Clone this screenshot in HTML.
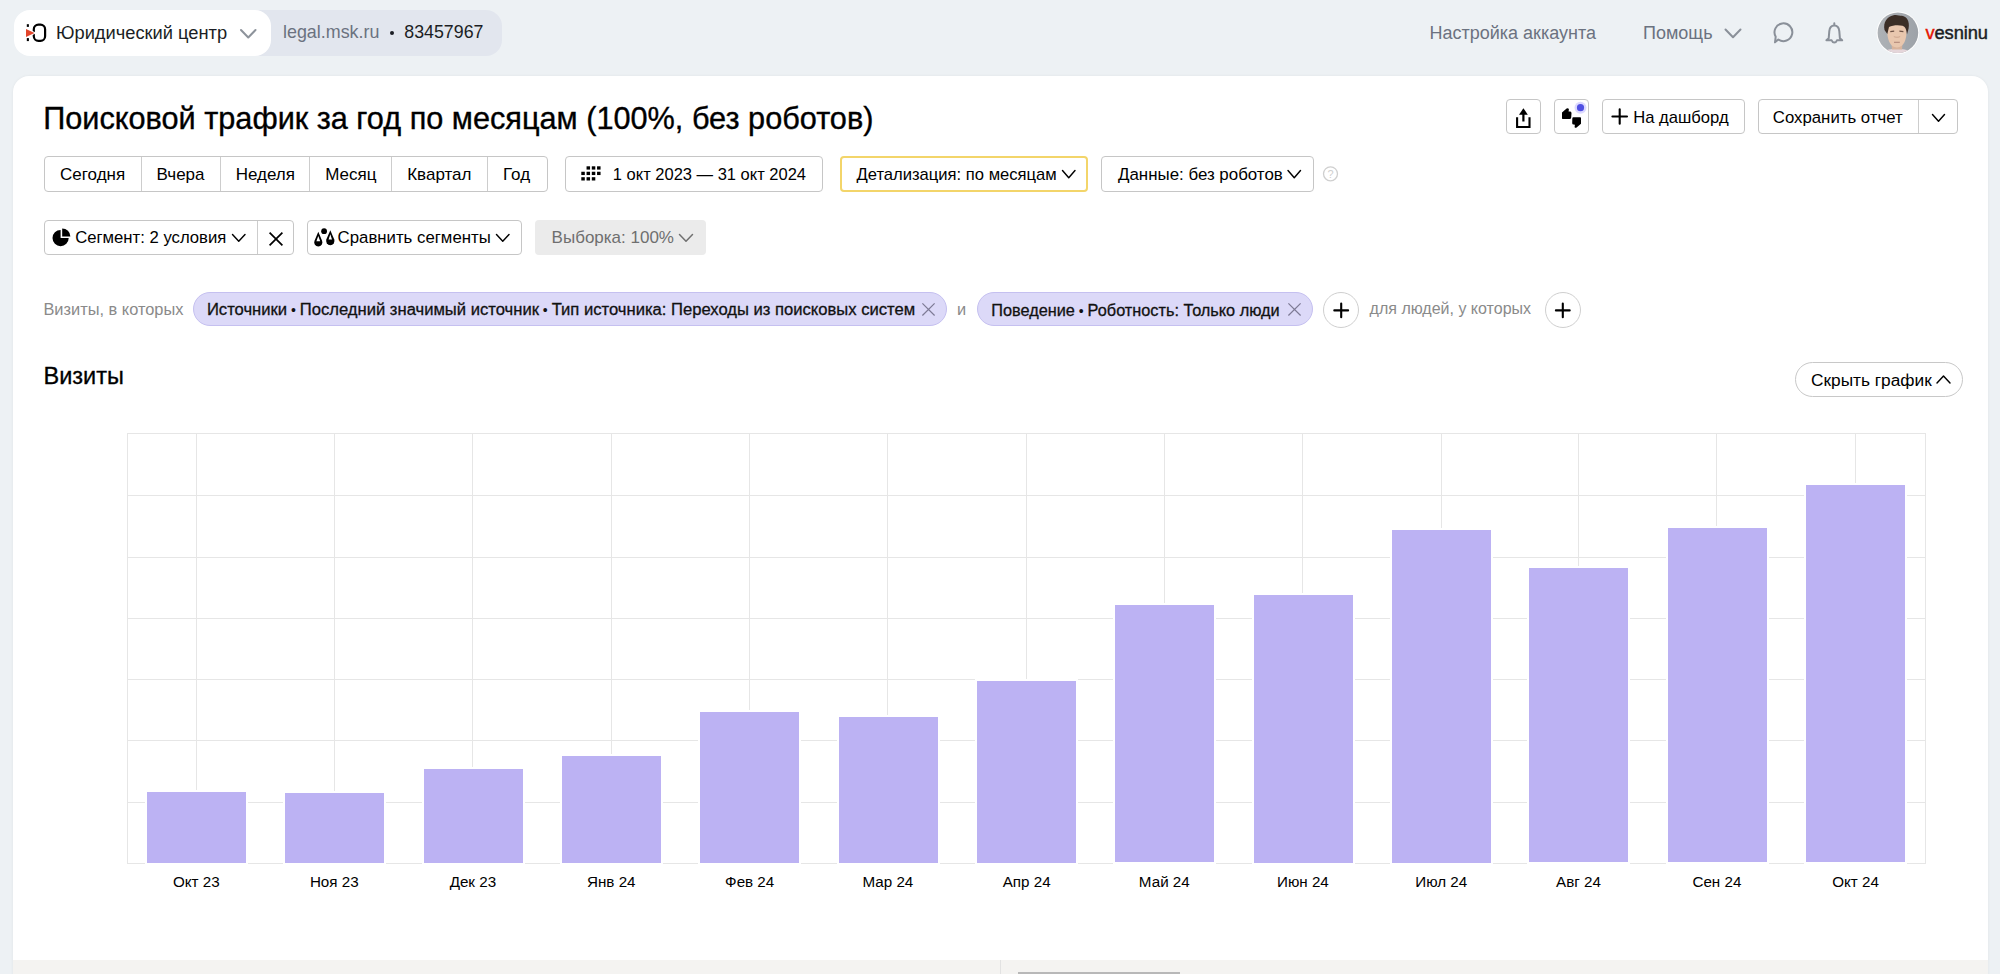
<!DOCTYPE html>
<html><head><meta charset="utf-8">
<style>
*{box-sizing:border-box;margin:0;padding:0}
html,body{width:2000px;height:974px;overflow:hidden;background:#edf1f4;font-family:"Liberation Sans",sans-serif;color:#000}
.a{position:absolute}
.t{position:absolute;white-space:nowrap;line-height:1}
.btn{position:absolute;border:1px solid #c6c6c6;border-radius:4px;background:#fff}
.vl{position:absolute;width:1px;background:#cdcdcd}
svg{position:absolute;overflow:visible}
.card{position:absolute;left:13px;top:76px;width:1975px;height:920px;background:#fff;border-radius:16px;box-shadow:0 0 3px rgba(0,0,0,0.06)}
.gh{position:absolute;left:127px;width:1799px;height:1px;background:#e6e6e6}
.gv{position:absolute;top:433px;height:430px;width:1px;background:#e6e6e6}
.bar{position:absolute;width:99px;background:#bcb2f3;box-shadow:0 0 0 2px #fff}
.ml{position:absolute;top:873.7px;width:120px;text-align:center;font-size:15.2px;line-height:1}
</style></head>
<body>
<!-- header -->
<div class="a" style="left:250px;top:10px;width:252px;height:46px;background:#e2e6ee;border-radius:0 16px 16px 0"></div>
<div class="a" style="left:14px;top:10px;width:257px;height:46px;background:#fff;border-radius:16px"></div>

<div class="t" style="left:56px;top:23.7px;font-size:18.3px;color:#1b1e24">Юридический центр</div>
<div class="t" style="left:283px;top:24.3px;font-size:17.9px;color:#6b7280">legal.msk.ru</div>
<div class="a" style="left:390px;top:30.5px;width:4px;height:4px;border-radius:50%;background:#1b1e24"></div>
<div class="t" style="left:404.3px;top:24.3px;font-size:17.8px;color:#1b1e24">83457967</div>

<div class="t" style="left:1429.5px;top:24.3px;font-size:18px;color:#6b7280">Настройка аккаунта</div>
<div class="t" style="left:1643px;top:24.1px;font-size:18px;color:#6b7280">Помощь</div>

<div class="t" style="left:1925.5px;top:23.7px;font-size:18.3px;color:#1b1e24;-webkit-text-stroke:0.45px #1b1e24;letter-spacing:-0.1px"><span style="color:#e61400;-webkit-text-stroke-color:#e61400">v</span>esninu</div>

<!-- card -->
<div class="card"></div>
<div class="t" style="left:43.2px;top:104px;font-size:30.68px;-webkit-text-stroke:0.35px #000">Поисковой трафик за год по месяцам (100%, без роботов)</div>

<!-- row1 -->
<div class="btn" style="left:44px;top:156px;width:504px;height:36px"></div>
<div class="vl" style="left:141px;top:157px;height:34px"></div>
<div class="vl" style="left:220px;top:157px;height:34px"></div>
<div class="vl" style="left:309px;top:157px;height:34px"></div>
<div class="vl" style="left:391px;top:157px;height:34px"></div>
<div class="vl" style="left:487px;top:157px;height:34px"></div>
<div class="t" style="left:60px;top:165.5px;font-size:17px">Сегодня</div>
<div class="t" style="left:156.5px;top:165.5px;font-size:17px">Вчера</div>
<div class="t" style="left:235.7px;top:165.5px;font-size:17px">Неделя</div>
<div class="t" style="left:325.2px;top:165.5px;font-size:17px">Месяц</div>
<div class="t" style="left:407.2px;top:165.5px;font-size:17px">Квартал</div>
<div class="t" style="left:503px;top:165.5px;font-size:17px">Год</div>

<div class="btn" style="left:565px;top:156px;width:258px;height:36px"></div>
<div class="t" style="left:612.8px;top:165.8px;font-size:16.5px">1 окт 2023 — 31 окт 2024</div>

<div class="btn" style="left:840px;top:156px;width:248px;height:36px;border:2px solid #f3d56a"></div>
<div class="t" style="left:856.5px;top:166.9px;font-size:16.6px">Детализация: по месяцам</div>

<div class="btn" style="left:1101px;top:156px;width:213px;height:36px"></div>
<div class="t" style="left:1118px;top:166.9px;font-size:16.9px">Данные: без роботов</div>

<!-- row2 -->
<div class="btn" style="left:44px;top:220px;width:250px;height:35px"></div>
<div class="vl" style="left:257px;top:221px;height:33px"></div>
<div class="t" style="left:75.2px;top:229.6px;font-size:16.7px">Сегмент: 2 условия</div>

<div class="btn" style="left:307px;top:220px;width:215px;height:35px"></div>
<div class="t" style="left:337.6px;top:229.6px;font-size:16.8px">Сравнить сегменты</div>

<div class="a" style="left:535px;top:220px;width:171px;height:35px;background:#ebebeb;border-radius:4px"></div>
<div class="t" style="left:551.6px;top:229.2px;font-size:17px;color:#6f6f6f">Выборка: 100%</div>

<!-- row3 chips -->
<div class="t" style="left:43.4px;top:300.5px;font-size:16.4px;color:#8a8a8a">Визиты, в которых</div>
<div class="a" style="left:193px;top:292px;width:754px;height:34px;background:#dcd9f8;border:1px solid #c5c0f0;border-radius:17px"></div>
<div class="t" style="left:206.9px;top:302.3px;font-size:16.63px;color:#111;-webkit-text-stroke:0.3px #111">Источники<span style="font-size:14px;-webkit-text-stroke:0"> • </span>Последний значимый источник<span style="font-size:14px;-webkit-text-stroke:0"> • </span>Тип источника: Переходы из поисковых систем</div>
<div class="t" style="left:957px;top:300.5px;font-size:16.4px;color:#8a8a8a">и</div>
<div class="a" style="left:977px;top:292px;width:336px;height:34px;background:#dcd9f8;border:1px solid #c5c0f0;border-radius:17px"></div>
<div class="t" style="left:991.3px;top:301.7px;font-size:16.29px;color:#111;-webkit-text-stroke:0.3px #111">Поведение<span style="font-size:14px;-webkit-text-stroke:0"> • </span>Роботность: Только люди</div>
<div class="a" style="left:1323px;top:292px;width:36px;height:36px;border:1px solid #cfcfcf;border-radius:50%;background:#fff"></div>
<div class="t" style="left:1369.6px;top:300.5px;font-size:16px;color:#8a8a8a">для людей, у которых</div>
<div class="a" style="left:1545px;top:292px;width:36px;height:36px;border:1px solid #cfcfcf;border-radius:50%;background:#fff"></div>

<!-- Визиты -->
<div class="t" style="left:43.5px;top:364.5px;font-size:23.5px;-webkit-text-stroke:0.3px #000">Визиты</div>
<div class="a" style="left:1795px;top:362px;width:168px;height:35px;border:1px solid #c8c8c8;border-radius:18px;background:#fff"></div>
<div class="t" style="left:1811px;top:371.8px;font-size:17.3px">Скрыть график</div>

<!-- top right buttons -->
<div class="btn" style="left:1506px;top:99px;width:35px;height:35px"></div>
<div class="btn" style="left:1554px;top:99px;width:35px;height:35px"></div>
<div class="btn" style="left:1602px;top:99px;width:143px;height:35px"></div>
<div class="t" style="left:1633.3px;top:109.5px;font-size:16.6px">На дашборд</div>
<div class="btn" style="left:1758px;top:99px;width:200px;height:35px"></div>
<div class="vl" style="left:1918px;top:100px;height:33px"></div>
<div class="t" style="left:1772.8px;top:109.5px;font-size:16.8px">Сохранить отчет</div>

<!-- chart grid -->
<div class="gh" style="top:433px"></div>
<div class="gh" style="top:495px"></div>
<div class="gh" style="top:557px"></div>
<div class="gh" style="top:618px"></div>
<div class="gh" style="top:679px"></div>
<div class="gh" style="top:740px"></div>
<div class="gh" style="top:802px"></div>
<div class="gh" style="top:863px"></div>
<div class="gv" style="left:127px"></div>
<div class="gv" style="left:1925px"></div>
<div class="gv" style="left:195.8px"></div>
<div class="gv" style="left:333.8px"></div>
<div class="gv" style="left:472.4px"></div>
<div class="gv" style="left:610.8px"></div>
<div class="gv" style="left:749.2px"></div>
<div class="gv" style="left:887.4px"></div>
<div class="gv" style="left:1026.2px"></div>
<div class="gv" style="left:1163.8px"></div>
<div class="gv" style="left:1302.4px"></div>
<div class="gv" style="left:1440.8px"></div>
<div class="gv" style="left:1578.0px"></div>
<div class="gv" style="left:1716.4px"></div>
<div class="gv" style="left:1855.0px"></div>
<div class="bar" style="left:147.0px;top:792.0px;height:70.5px"></div>
<div class="bar" style="left:285.0px;top:793.0px;height:69.5px"></div>
<div class="bar" style="left:423.6px;top:769.0px;height:93.5px"></div>
<div class="bar" style="left:562.0px;top:756.0px;height:106.5px"></div>
<div class="bar" style="left:700.4px;top:712.0px;height:150.5px"></div>
<div class="bar" style="left:838.6px;top:717.0px;height:145.5px"></div>
<div class="bar" style="left:977.4px;top:681.0px;height:181.5px"></div>
<div class="bar" style="left:1115.0px;top:605.4px;height:257.1px"></div>
<div class="bar" style="left:1253.6px;top:595.0px;height:267.5px"></div>
<div class="bar" style="left:1392.0px;top:530.0px;height:332.5px"></div>
<div class="bar" style="left:1529.2px;top:568.2px;height:294.3px"></div>
<div class="bar" style="left:1667.6px;top:527.7px;height:334.8px"></div>
<div class="bar" style="left:1806.2px;top:484.7px;height:377.8px"></div>
<div class="ml" style="left:136.3px">Окт 23</div>
<div class="ml" style="left:274.3px">Ноя 23</div>
<div class="ml" style="left:412.9px">Дек 23</div>
<div class="ml" style="left:551.3px">Янв 24</div>
<div class="ml" style="left:689.7px">Фев 24</div>
<div class="ml" style="left:827.9px">Мар 24</div>
<div class="ml" style="left:966.7px">Апр 24</div>
<div class="ml" style="left:1104.3px">Май 24</div>
<div class="ml" style="left:1242.9px">Июн 24</div>
<div class="ml" style="left:1381.3px">Июл 24</div>
<div class="ml" style="left:1518.5px">Авг 24</div>
<div class="ml" style="left:1656.9px">Сен 24</div>
<div class="ml" style="left:1795.5px">Окт 24</div>

<!-- bottom strip -->
<div class="a" style="left:13px;top:960px;width:1975px;height:14px;background:#f4f3f1"></div>
<div class="a" style="left:1000px;top:960px;width:1px;height:14px;background:#e2e2e2"></div>
<div class="a" style="left:1018px;top:972px;width:162px;height:2px;background:#b8b8b8"></div>
<svg style="left:0;top:0" width="2000" height="974" viewBox="0 0 2000 974"><rect x="33.8" y="24.6" width="11.3" height="16.3" rx="4.6" fill="none" stroke="#000" stroke-width="2.2"/>
<path d="M24.5 27.5 L37 33 L24.5 38.5 Z" fill="#fff"/>
<path d="M26 28.9 L34.5 33 L26 37.1 Z" fill="#e2452b"/>
<rect x="26.8" y="24.2" width="2.1" height="2.7" fill="#000"/><rect x="26.8" y="38.1" width="2.1" height="3" fill="#000"/>
<path d="M241 30 L248.25 37.5 L255.5 30" fill="none" stroke="#8d939b" stroke-width="2" stroke-linecap="round" stroke-linejoin="round"/>
<path d="M1725.5 29.5 L1733.0 37.3 L1740.5 29.5" fill="none" stroke="#8a9099" stroke-width="2" stroke-linecap="round" stroke-linejoin="round"/>
<path d="M1778.3 39.5 A8.9 8.9 0 1 0 1775.7 36.65 L1775 42.3 Z" fill="none" stroke="#8a9099" stroke-width="2" stroke-linejoin="round"/>
<path d="M1834.3 23.2 V25.4 M1828.7 38.3 L1829.3 31.2 C1829.6 27.6 1831.6 25.6 1834.3 25.6 C1837 25.6 1839 27.6 1839.3 31.2 L1839.9 38.3 L1842.2 40.3 L1837 40.3 C1836.5 41.8 1835.5 42.5 1834.3 42.5 C1833.1 42.5 1832.1 41.8 1831.6 40.3 L1826.4 40.3 Z" fill="none" stroke="#8a9099" stroke-width="2" stroke-linejoin="round" stroke-linecap="round"/>
<defs><filter id="avb" x="-10%" y="-10%" width="120%" height="120%"><feGaussianBlur stdDeviation="0.45"/></filter><clipPath id="av"><circle cx="1897.9" cy="32.7" r="20.3"/></clipPath><linearGradient id="avg" x1="0" x2="1"><stop offset="0" stop-color="#aeb2b6"/><stop offset="1" stop-color="#9da2a8"/></linearGradient></defs>
<circle cx="1897.9" cy="32.7" r="21.3" fill="#fff"/>
<g clip-path="url(#av)"><rect x="1877" y="12" width="42" height="42" fill="url(#avg)"/><g filter="url(#avb)"><path d="M1884 52 C1887 47.5 1906 47.5 1910 52 L1912 56 L1882 56 Z" fill="#e5d6da"/><path d="M1891.5 43 L1902.5 43 L1902 49.5 L1892 49.5 Z" fill="#d9b49c"/><path d="M1887.3 30 C1887 38 1889.5 47.5 1897 47.5 C1904 47.5 1906.8 39 1906.6 30 C1906.5 25 1902 22.5 1897 22.5 C1891.5 22.5 1887.5 25 1887.3 30 Z" fill="#e9c7ae"/><path d="M1884.5 30 C1883 22 1887 16.5 1893.5 15.2 C1897 14.5 1899.5 15.8 1902 15.8 C1906.5 16.5 1910 21 1908.6 28.5 L1907 34.5 C1906.5 29.5 1905.2 26.8 1902.5 25.8 C1898 24.6 1892.5 25.3 1889 27 L1887.3 34 Z" fill="#3b2d27"/><path d="M1890.3 31.6 L1894.2 31.2 M1899.4 31.2 L1903.4 31.6" stroke="#6e5246" stroke-width="1.2"/><path d="M1893.8 36.5 C1894.5 37.5 1899.5 37.5 1900.2 36.5" stroke="#c79e88" stroke-width="0.8" fill="none"/><path d="M1894 42.3 L1899.8 42.3" stroke="#b3887a" stroke-width="1.1"/></g></g>
<path d="M1519 114.8 L1523.4 108.2 L1527.8 114.8 Z" fill="#000"/>
<path d="M1523.4 113 V121.5" stroke="#000" stroke-width="2.2"/>
<path d="M1517.1 117.3 V127 H1529.5 V117.3" fill="none" stroke="#000" stroke-width="2.1"/>
<path d="M1562 112.6 L1566.6 108.6 Q1568.2 107.6 1568.9 109.2 L1568.6 111.4 L1570.2 111.6 Q1571.5 111.9 1571.5 113.2 L1571.2 117.4 Q1571 118.9 1569.6 118.9 L1562.6 118.9 Q1562 118.9 1562 118.2 Z" fill="#000"/>
<path d="M1573.4 117.2 L1580.2 117.2 Q1581 117.2 1581 118 L1581 123.8 L1576.6 127.4 Q1575 128.4 1574.6 126.9 L1574.9 124.7 L1573.6 124.6 Q1572.2 124.4 1572.2 123.2 L1572.3 118.5 Q1572.4 117.2 1573.4 117.2 Z" fill="#000"/>
<circle cx="1580.5" cy="107.7" r="6" fill="#dcd9ff"/><circle cx="1580.5" cy="107.7" r="3.6" fill="#5050e2"/>
<path d="M1612.4 116.5 L1627.0 116.5 M1619.7 109.2 L1619.7 123.8" fill="none" stroke="#000" stroke-width="2.1" stroke-linecap="round"/>
<path d="M1932.5 114.5 L1938.5 121.2 L1944.5 114.5" fill="none" stroke="#000" stroke-width="1.45" stroke-linecap="round" stroke-linejoin="round"/>
<rect x="586.55" y="166.30" width="3.5" height="3.3" fill="#000"/><rect x="591.80" y="166.30" width="3.5" height="3.3" fill="#000"/><rect x="597.05" y="166.30" width="3.5" height="3.3" fill="#000"/><rect x="581.30" y="171.75" width="3.5" height="3.3" fill="#000"/><rect x="586.55" y="171.75" width="3.5" height="3.3" fill="#000"/><rect x="591.80" y="171.75" width="3.5" height="3.3" fill="#000"/><rect x="597.05" y="171.75" width="3.5" height="3.3" fill="#000"/><rect x="581.30" y="177.20" width="3.5" height="3.3" fill="#000"/><rect x="586.55" y="177.20" width="3.5" height="3.3" fill="#000"/><rect x="591.80" y="177.20" width="3.5" height="3.3" fill="#000"/>
<path d="M1062.5 170.5 L1068.75 177.7 L1075 170.5" fill="none" stroke="#000" stroke-width="1.45" stroke-linecap="round" stroke-linejoin="round"/>
<path d="M1288 170.5 L1294.25 177.7 L1300.5 170.5" fill="none" stroke="#000" stroke-width="1.45" stroke-linecap="round" stroke-linejoin="round"/>
<circle cx="1330.5" cy="173.8" r="7" fill="none" stroke="#cfcfcf" stroke-width="1.3"/>
<text x="1330.5" y="178" font-family="Liberation Sans" font-size="11" fill="#cfcfcf" text-anchor="middle">?</text>
<path d="M60.6 238.1 L60.6 230 A8.1 8.1 0 1 0 68.7 238.1 Z" fill="#000"/>
<path d="M62.2 236.6 L62.2 228.5 A8.2 8.2 0 0 1 70.4 236.6 Z" fill="#000"/>
<path d="M232.5 234.5 L238.75 241.2 L245 234.5" fill="none" stroke="#000" stroke-width="1.45" stroke-linecap="round" stroke-linejoin="round"/>
<path d="M269.6 232.6 L282.4 245.4 M282.4 232.6 L269.6 245.4" fill="none" stroke="#000" stroke-width="1.7" stroke-linecap="butt"/>
<path d="M318.3 231.8 L322.08 240.81 A4.1 4.1 0 1 1 314.52 240.81 Z" fill="#000"/><path d="M318.3 235.9 L320.2 241.3 L316.4 241.3 Z" fill="#fff"/>
<path d="M330.3 230.2 L334.17 239.37 A4.2 4.2 0 1 1 326.43 239.37 Z" fill="#000"/><path d="M330.3 234.2 L332 239.5 L328.6 239.5 Z" fill="#fff"/>
<circle cx="324.1" cy="231.2" r="2.9" fill="#000"/>
<path d="M496.5 234.5 L502.75 241.2 L509 234.5" fill="none" stroke="#000" stroke-width="1.45" stroke-linecap="round" stroke-linejoin="round"/>
<path d="M679.5 234.5 L686.0 241.2 L692.5 234.5" fill="none" stroke="#707070" stroke-width="1.5" stroke-linecap="round" stroke-linejoin="round"/>
<path d="M922.4 303.29999999999995 L934.6 315.5 M934.6 303.29999999999995 L922.4 315.5" fill="none" stroke="#7d7a95" stroke-width="1.2" stroke-linecap="butt"/>
<path d="M1288.4 303.29999999999995 L1300.6 315.5 M1300.6 303.29999999999995 L1288.4 315.5" fill="none" stroke="#7d7a95" stroke-width="1.2" stroke-linecap="butt"/>
<path d="M1334.3 310.4 L1348.1000000000001 310.4 M1341.2 303.5 L1341.2 317.29999999999995" fill="none" stroke="#000" stroke-width="2.1" stroke-linecap="round"/>
<path d="M1555.8999999999999 310.4 L1569.7 310.4 M1562.8 303.5 L1562.8 317.29999999999995" fill="none" stroke="#000" stroke-width="2.1" stroke-linecap="round"/>
<path d="M1937 383 L1943.5 376 L1950 383" fill="none" stroke="#000" stroke-width="1.45" stroke-linecap="round" stroke-linejoin="round"/></svg>
</body></html>
